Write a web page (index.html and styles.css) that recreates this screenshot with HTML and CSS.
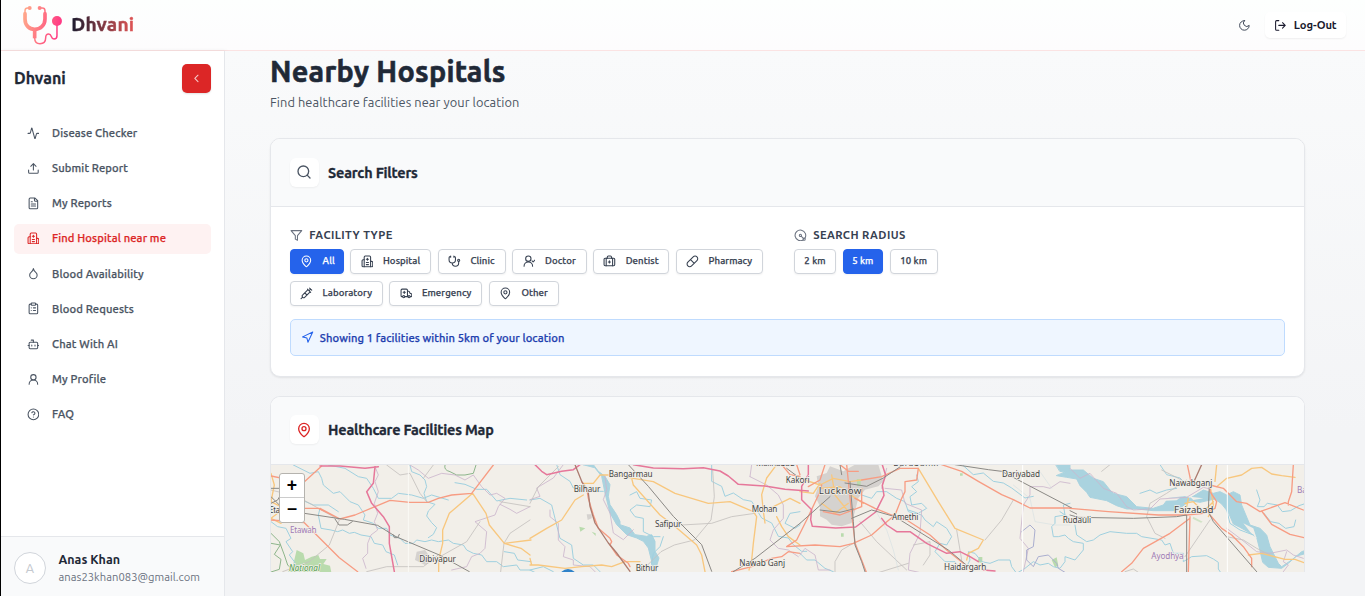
FILE: index.html
```html
<!DOCTYPE html>
<html lang="en">
<head>
<meta charset="utf-8">
<title>Dhvani - Nearby Hospitals</title>
<link rel="stylesheet" href="styles.css">
</head>
<body>
<svg class="defs" width="0" height="0">
  <symbol id="pin" viewBox="0 0 24 24"><path d="M20 10c0 4.993-5.539 10.193-7.399 11.799a1 1 0 0 1-1.202 0C9.539 20.193 4 14.993 4 10a8 8 0 0 1 16 0"/><circle cx="12" cy="10" r="3"/></symbol>
  <symbol id="hospital" viewBox="0 0 24 24"><path d="M12 6v4M14 14h-4M14 18h-4M14 8h-4"/><path d="M18 12h2a2 2 0 0 1 2 2v6a2 2 0 0 1-2 2H4a2 2 0 0 1-2-2v-9a2 2 0 0 1 2-2h2"/><path d="M18 22V4a2 2 0 0 0-2-2H8a2 2 0 0 0-2 2v18"/></symbol>
</svg>
<div class="app">
  <header class="topbar">
    <div class="brand">
      <svg class="brand-logo" viewBox="66 14 124 120" fill="none">
        <defs><linearGradient id="lg" gradientUnits="userSpaceOnUse" x1="68" y1="40" x2="188" y2="70"><stop offset="0" stop-color="#ffab8c"/><stop offset=".5" stop-color="#ff7583"/><stop offset="1" stop-color="#ff3385"/></linearGradient></defs>
        <g stroke="url(#lg)">
          <path stroke-width="11" stroke-linecap="round" d="M75 40V56C75 76 88 87 104 87S135 76 135 56V40"/>
          <path stroke-width="4.5" d="M75 40V31Q75 23 83 23H88M135 40V31Q135 23 127 23H120"/>
          <path stroke-width="11" d="M104 88V114"/>
          <path stroke-width="4.5" d="M104 112C104 124 110 130 120 130C133 130 137 123 137 113C137 105 140 101 146 101C157 101 151 116 162 116Q171 116 171 106V74"/>
        </g>
        <g fill="url(#lg)"><circle cx="89" cy="23" r="6"/><circle cx="119" cy="23" r="6"/><circle cx="171" cy="62" r="15"/></g>
      </svg>
      <span class="brand-name">Dhvani</span>
    </div>
    <div class="top-actions">
      <svg class="icon" viewBox="0 0 24 24"><path d="M12 3a6 6 0 0 0 9 9 9 9 0 1 1-9-9Z"/></svg>
      <button class="logout"><svg class="icon" viewBox="0 0 24 24"><path d="M9 21H5a2 2 0 0 1-2-2V5a2 2 0 0 1 2-2h4M16 17l5-5-5-5M21 12H9"/></svg><span>Log-Out</span></button>
    </div>
  </header>
  <div class="body">
    <aside class="sidebar">
      <div class="side-head"><span class="side-title">Dhvani</span><button class="collapse"><svg class="icon" viewBox="0 0 24 24"><path d="m15 18-6-6 6-6"/></svg></button></div>
      <nav class="nav">
        <a class="nav-item"><svg class="icon" viewBox="0 0 24 24"><path d="M22 12h-2.5a2 2 0 0 0-1.9 1.5l-2.4 8.3a.25.25 0 0 1-.5 0L9.200 2.200a.25.25 0 0 0-.5 0l-2.300 8.300A2 2 0 0 1 4.500 12H2"/></svg><span>Disease Checker</span></a>
        <a class="nav-item"><svg class="icon" viewBox="0 0 24 24"><path d="M21 15v4a2 2 0 0 1-2 2H5a2 2 0 0 1-2-2v-4M17 8l-5-5-5 5M12 3v12"/></svg><span>Submit Report</span></a>
        <a class="nav-item"><svg class="icon" viewBox="0 0 24 24"><path d="M15 2H6a2 2 0 0 0-2 2v16a2 2 0 0 0 2 2h12a2 2 0 0 0 2-2V7ZM14 2v4a2 2 0 0 0 2 2h4M10 9H8M16 13H8M16 17H8"/></svg><span>My Reports</span></a>
        <a class="nav-item nav-item--active"><svg class="icon"><use href="#hospital"/></svg><span>Find Hospital near me</span></a>
        <a class="nav-item"><svg class="icon" viewBox="0 0 24 24"><path d="M12 22a7 7 0 0 0 7-7c0-2-1-3.900-3-5.500s-3.500-4-4-6.500c-.5 2.500-2 4.900-4 6.500C6 11.100 5 13 5 15a7 7 0 0 0 7 7z"/></svg><span>Blood Availability</span></a>
        <a class="nav-item"><svg class="icon" viewBox="0 0 24 24"><rect x="8" y="2" width="8" height="4" rx="1"/><path d="M16 4h2a2 2 0 0 1 2 2v14a2 2 0 0 1-2 2H6a2 2 0 0 1-2-2V6a2 2 0 0 1 2-2h2M12 11h4M12 16h4M8 11h.01M8 16h.01"/></svg><span>Blood Requests</span></a>
        <a class="nav-item"><svg class="icon" viewBox="0 0 24 24"><path d="M12 8V4H8M2 14h2M20 14h2M15 13v2M9 13v2"/><rect x="4" y="8" width="16" height="12" rx="2"/></svg><span>Chat With AI</span></a>
        <a class="nav-item"><svg class="icon" viewBox="0 0 24 24"><circle cx="12" cy="8" r="5"/><path d="M20 21a8 8 0 0 0-16 0"/></svg><span>My Profile</span></a>
        <a class="nav-item"><svg class="icon" viewBox="0 0 24 24"><circle cx="12" cy="12" r="10"/><path d="M9.090 9a3 3 0 0 1 5.830 1c0 2-3 3-3 3M12 17h.01"/></svg><span>FAQ</span></a>
      </nav>
      <div class="account">
        <span class="avatar">A</span>
        <div class="account-text"><strong>Anas Khan</strong><span>anas23khan083@gmail.com</span></div>
      </div>
    </aside>
    <main class="main">
      <h1>Nearby Hospitals</h1>
      <p class="lead">Find healthcare facilities near your location</p>
      <section class="card card--filters">
        <div class="card-head"><span class="tile"><svg class="icon" viewBox="0 0 24 24"><circle cx="11" cy="11" r="8"/><path d="m21 21-4.300-4.300"/></svg></span><h2>Search Filters</h2></div>
        <div class="card-body">
          <div class="groups">
            <div>
              <h3><svg class="icon" viewBox="0 0 24 24"><path d="M22 3H2l8 9.460V19l4 2v-8.540L22 3z"/></svg><span>FACILITY TYPE</span></h3>
              <div class="chips">
                <button class="chip chip--on w-all"><svg class="icon"><use href="#pin"/></svg><span>All</span></button>
                <button class="chip w-hospital"><svg class="icon"><use href="#hospital"/></svg><span>Hospital</span></button>
                <button class="chip w-clinic"><svg class="icon" viewBox="0 0 24 24"><path d="M11 2v2M5 2v2M5 3H4a2 2 0 0 0-2 2v4a6 6 0 0 0 12 0V5a2 2 0 0 0-2-2h-1M8 15a6 6 0 0 0 12 0v-3"/><circle cx="20" cy="10" r="2"/></svg><span>Clinic</span></button>
                <button class="chip w-doctor"><svg class="icon" viewBox="0 0 24 24"><circle cx="10" cy="7" r="5"/><path d="M2 21a8 8 0 0 1 16 0M17 11l2 2 4-4"/></svg><span>Doctor</span></button>
                <button class="chip w-dentist"><svg class="icon" viewBox="0 0 24 24"><path d="M12 11v4M14 13h-4M16 6V4a2 2 0 0 0-2-2h-4a2 2 0 0 0-2 2v2M18 6v14M6 6v14"/><rect x="2" y="6" width="20" height="14" rx="2"/></svg><span>Dentist</span></button>
                <button class="chip w-pharmacy"><svg class="icon" viewBox="0 0 24 24"><path d="m10.500 20.500 10-10a4.950 4.950 0 1 0-7-7l-10 10a4.950 4.950 0 1 0 7 7ZM8.500 8.500l7 7"/></svg><span>Pharmacy</span></button>
                <button class="chip w-lab"><svg class="icon" viewBox="0 0 24 24"><path d="m18 2 4 4M17 7l3-3M19 9 8.700 19.300c-1 1-2.500 1-3.400 0l-.6-.6c-1-1-1-2.500 0-3.400L15 5M9 11l4 4M5 19l-3 3M14 4l6 6"/></svg><span>Laboratory</span></button>
                <button class="chip w-emergency"><svg class="icon" viewBox="0 0 24 24"><path d="M10 10H6M8 8v4M14 18V6a2 2 0 0 0-2-2H4a2 2 0 0 0-2 2v11a1 1 0 0 0 1 1h2M9 18h6M19 18h2a1 1 0 0 0 1-1v-3.280a1 1 0 0 0-.684-.948l-1.923-.641a1 1 0 0 1-.578-.502l-1.539-3.076A1 1 0 0 0 16.382 8H14"/><circle cx="17" cy="18" r="2"/><circle cx="7" cy="18" r="2"/></svg><span>Emergency</span></button>
                <button class="chip w-other"><svg class="icon"><use href="#pin"/></svg><span>Other</span></button>
              </div>
            </div>
            <div>
              <h3><svg class="icon" viewBox="0 0 24 24"><path d="M20.340 17.520a10 10 0 1 0-2.820 2.820M13.410 13.410l4.180 4.180"/><circle cx="19" cy="19" r="2"/><circle cx="12" cy="12" r="2"/></svg><span>SEARCH RADIUS</span></h3>
              <div class="chips">
                <button class="chip chip--plain w-2">2 km</button>
                <button class="chip chip--plain chip--on w-5">5 km</button>
                <button class="chip chip--plain w-10">10 km</button>
              </div>
            </div>
          </div>
          <div class="notice"><svg class="icon" viewBox="0 0 24 24"><path d="M3 11 22 2l-9 19-2-8z"/></svg><span>Showing 1 facilities within 5km of your location</span></div>
        </div>
      </section>
      <section class="card card--map">
        <div class="card-head"><span class="tile tile--red"><svg class="icon"><use href="#pin"/></svg></span><h2>Healthcare Facilities Map</h2></div>
        <div class="map">
          <svg class="map-canvas" viewBox="271 465 1033 107">
            <rect x="271" y="465" width="1033" height="107" fill="#f2efe9"/>
            <!-- west: Etawah, Dibiyapur -->
            <g class="sector" transform="translate(260 370) scale(.33333)">
              <path class="park" d="M110 540l20 10 5 20 20-10 20-5 5 12 20 0-10 15 20 5 5 25H80l20-30z"/>
              <path class="town" d="M470 545l25-5 15 20 15 10-30 15-30-15z"/>
              <path class="park-line" d="M555 285q-5 15 15 20l20 10 25 0 25-5 8-25M33 490l25 25 15 40 10 30 20 20M33 520l28 5-18 28 20 15-5 30-25 8"/>
              <path class="water" d="M33 455l20 15 25 5 15 30-15 10 20 30-10 10 15 20 10 30M100 285l50 25 25-5 10 20 5 20 30 25 20-5 30 30 25 10 20 30-5 15 30 10 15 15 25 0 10 20 30 10 15 15 25 0 10-10 25 5 20-5 20 5 30-5 15 10 30 5 10 15 20 10 25 5 15 20 30 0 20 15 40-5 10 15 30 0 20 10M450 285l5 20 25 10 15 15 5 20-8 20 8 25 25 8-20 20-5 15 15 20 15 15-10 20-15 10M180 415l-5 20 8 40 30 5 20 5 15-5 20 10 15-3 20 8 30 5 10 20 25 5 10 20 25 10 10 30M125 390l35 15 45 0 30 20M205 285l50 10 40 25 25 5 20 30 15 30 40 0 20-15 40 5 35 10 25-10 50 15M585 338l30 5 35 15 30 0 30 35 40-8 50 5M733 545l30 5 10 20 40 5"/>
              <path class="border" d="M345 290l10 25-10 20 10 30-12 35 10 30-10 25 10 25-20 15-10 25 0 30-15 15 10 30M450 285l25 15 30 25 40-15 40 5 30 15 25-15 25 35 25 25 20-5 25 15-20 25-10 25-60 20 35 30-5 50-15 15-25 10-15 30-45 10M720 403l30 15 20 12 40-20"/>
              <path class="minor" d="M33 360l80 20 125 70-30 75-60 50-80 30M380 285l40 30 30-5 30 60 20 25M520 285l-30 40M660 455l-40 60-80 45M810 450l-60 40-18 30-10 85M810 410l-90-15M320 605l60-15 110 0 45-35"/>
              <path class="secondary" d="M33 310l10 35-10 50 40 20-40 30 30 15M638 370l-70 60-20 50 0 40-12 50 0 35M638 370l40 60 10 35 45 55 80-10M733 520l50 15 27 20"/>
              <path class="primary" d="M185 288l-55 50-97-20M110 415l65 0 65 32 45-12 105-44 60 6 55 0 30-12 40-10 60-5 65-85M33 450l100 8 60 60 45 45 55 42M240 447l-60-32"/>
              <path class="trunk" d="M180 288l60 0 75 7 40-5M345 290l-5 50-20 25 15 35 35 40 18 30 0 50 15 85"/>
              <path class="rail" d="M33 380l40 40 60 10 120 18 100 18 55 34 130 55 90 50M225 447l12 18 25 0 15-10M33 355l40 0-20 35-20 10M400 495l3 8 10 0 5-10"/>
              <path class="seam" d="M445 285v320"/>
              <text class="place" x="28" y="429" textLength="50">Etaw</text>
              <text class="district" x="90" y="490" textLength="80">Etawah</text>
              <text class="reserve" x="87" y="602" textLength="93">National</text>
              <text class="place" x="478" y="575" textLength="110">Dibiyapur</text>
            </g>
            <!-- centre-west: Ganges, Bilhaur, Safipur -->
            <g class="sector" transform="translate(530 455) scale(.33333)">
              <path class="lake" d="M160 29h30l15 20 20 15 15 25-5 35 5 25 20 30 10 20 0 10 30 10 15 20 35 5 15-5 10 20 0 30 12 20-12 40h-10l0-30-10-40-15-20-20-10-30-10-30-30-20-35-15-60-10-50-20-25z"/>
              <path class="park" d="M148 215l18 5-15 10zM185 230l12 5 0 8z"/>
              <path class="town" d="M170 178h15v12l-12 5z"/>
              <path class="water" d="M0 135l30-5 35 20 10 40 15 60 35 20 5 40 30 20 30 0 20 20M400 245l-10 30-20 20-5 30M300 120l20-10 10 20 35 5-5 20-40-5-20 15 15 20 25 5 0 40 30 15 20 0M545 29l0 50 30 15 10 30 25-10 30 20 25 5 30 50 30 15 20 40 30 5 15 20 25 20 15 0M810 170l-30 5-15 30 30 15 15-10M80 29l10 30 30 20 10 20 30-5 40 15 20 0M0 345l40-10 30 15"/>
              <path class="border" d="M225 64l5 40-10 30 20 40 10 60 30 20 30-30M100 29l-30 40-50 30 10 25-30 10M60 165l0 20 25 20 0 50 20 20-5 30 30 10 0 15 50 5 30 30M660 65l5-36M660 65l50 25 35 30 15 30 0 40-30 35-10 30 25 25 30 5 30 20"/>
              <path class="minor" d="M85 35l-60 60-25 50M548 45l5 80-10 70-50 60-60 15-40 20-40 40M455 210l90-5 60-20 70-10"/>
              <path class="secondary" d="M160 85l30 0 20-25 50 0 50 10 60 10 65 35 50 15 50 15 65-5 70 30 10 15-10 80-5 50-8 30M740 29l-30 40-15 50 5 50 5 35M740 185l15 30 20 30 35 25M710 165l40-20 30-15 30 15M0 250l50-30 45-25 40-60 25-15M0 330l25 0 80 10 50-5 60-5 30 5 40-15 45 0M300 50l10 40 80 90 40 30 70 60 15 30 10 50M0 310l5 20"/>
              <path class="primary" d="M155 80l15 20 5 30 15 50 15 40 35 30 5 10-5 10 20 30 35 25 5 10M605 350l60-15 60-25 30-5 20-15 35 5M800 29l10 30M755 29l25 30 30 5"/>
              <path class="trunk" d="M15 29l20 20 15 10 45-10 35-5 20-15M310 29l60 10 90 2 60-3 50 10 25 15 30 25 80 5 60 10 70 5"/>
              <path class="rail" d="M295 29l60 65 75 90 85 85 30 80M610 350l65-40 135-105M770 40l40 30"/>
              <path class="railred" d="M135 29l20 50 20 35 5 40 15 50 40 60 25 30 40 55"/>
              <circle cx="114" cy="368" r="26" fill="#2f82c9"/>
              <text class="place" x="236" y="65" textLength="132">Bangarmau</text>
              <text class="place" x="131" y="111" textLength="80">Bilhaur</text>
              <text class="place" x="375" y="215" textLength="79">Safipur</text>
              <text class="place" x="317" y="348" textLength="68">Bithur</text>
              <text class="place" x="665" y="172" textLength="77">Mohan</text>
              <text class="place" x="628" y="332" textLength="137">Nawab Ganj</text>
              <text class="place" x="678" y="32" textLength="116">Malihabad</text>
            </g>
            <!-- centre-east: Lucknow, Haidargarh -->
            <g class="sector" transform="translate(800 455) scale(.33333)">
              <path class="town" d="M165 29h70l15 50-15 15-40 10-20 25-10 40-10 35-30 10-30-5-15-15-20-10 0-30-15-30 10-30-5-30 30-10 10-20 40 15z"/>
              <path class="park" d="M170 72h12v20l-10 2zM537 306h10v18l-15-3zM480 55h8v7h-8zM755 315l15-8 5 25-10 5zM123 235h8v10h-8z"/>
              <path class="water" d="M350 60l5 20-20 15 15 15-20 15 5 25 30-5 15 15-25 15-30-10M185 120l30 10 15-20 30 0 30 20 25 10 10 30 40 10 10 15 25 20 10-15 30 20 15 25-15 25-20-5-15 25 20 20 10 10 30 0 10 15 25 0 10-20-5-25 20 5 20 25 25 5 25-10 35 0 5 20 15 20 25-15 25-20 20 10 25-5 15 10 20 5 15-20 0-15 30 10 25-30 0-20-30-5-15-10-10-10-20 5-15 0-5-30 10-10 0-20 30-5-5-30 20-5M490 32l30 27 30-5 30 25 30 5 25 15 40 30 25-5M0 295l20 20 25 0 30 25 25 10M780 170l30 20"/>
              <path class="lake" d="M768 29h42v25l-30-5z"/>
              <path class="border" d="M245 100l15-60M255 100l50 5 10 40 50 20-5 70-30 60-5 50 45 10 20 15 25 0M0 300l15-20 30 20 10 45 35 0M670 350l15-70-25-30 10-100 20-30 0-25 40 0 20 5 30-20 30 5"/>
              <path class="border2" d="M665 230l25-20 15 15-5 50-20 10 0 30 20 20 15-30 30-5 25 25 5 15 25 15"/>
              <path class="minor" d="M180 200l50 60 90 85M325 325l-90 28M160 265l-35 20-20 35 0 30M640 135l-35 60-50 60M470 225l15 90M340 270l50-10 0 40-20 30"/>
              <path class="thin" d="M220 155l40 70 20 60 15 60M640 90l50 40 15 70 60 10 45 0M690 50l30 0 35 50"/>
              <path class="secondary" d="M355 40l60 100 50 80 85 35-15 25-30 15-5 20M0 70l60 20 40-20 50 10 35-5M60 100l60-5 40 30 30 20M95 60l10 60 40 50M0 110l40 5 20-30M65 145l40 30 40-30"/>
              <path class="primary" d="M25 95l35-20 15-46M120 29l25 20 30 0M185 75l60-10 55-25 55 0-5 35-35 5 0 30-10 20-20 50-30 25-40 35-55 25-40 10-75-5-85 5 30-20 30-60 40-85 5-20M165 130l60 30 50 20 45 15 70 45 50 45 50 40M140 29l10 100 15 135 35 90M70 170l50 10 65-25 0-55M425 29l60 20 50 30 70 40 35 15 30 15 20 10 120 0"/>
              <path class="trunk" d="M25 29l0 30-20 35 0 40 30 30-3 30 5 20 70 5 60-3 60-45 25-50-5-30 10-30-15-47M245 190l15 20 30 20 40 0 50 35 60 30 40-5 30 15 25 15M550 345l35 3"/>
              <path class="rail" d="M0 205l90-80M120 29l5 30M310 29l-60 40-50 25-65-10M150 80l10 120 5 70 20 50 10 30M60 165l60 7 40-10M155 190l60-25 70 20 160 100 60 50M465 29l100 15 40 5 210 110"/>
              <path class="seam wide" d="M668 29v322"/>
              <text class="place" x="-43" y="85" textLength="72">Kakori</text>
              <text class="city" x="56" y="117" textLength="128">Lucknow</text>
              <text class="place" x="276" y="196" textLength="79">Amethi</text>
              <text class="place" x="432" y="346" textLength="127">Haidargarh</text>
              <text class="place" x="606" y="67" textLength="114">Dariyabad</text>
              <text class="place" x="280" y="32" textLength="135">Barabanki</text>
            </g>
            <!-- east: Ghaghara, Faizabad -->
            <g class="sector" transform="translate(1070 455) scale(.33333)">
              <path class="lake" d="M0 45h40l30 25 30 10 20 25 10 10 40 10 30 30 50 5 30-10 15-20 50-5 15 5 40-25 30 10 20-5 20 10 20-10 20 10 5 30 25 60 30 10 20 20 10 35 25 50 10 10 30-20 30-25 15-5v10l-30 8-25 22-20 15-40-3-17-15-8-35-10-40-15-10-35-20-20-10-15-35-20-25-20-15-45 10-30-5-40 30-70 0-50-5-30 0-30-10-30-15-50-10-10-15-20-20-10-20-30-5-30-5z"/>
              <path class="park-fill" d="M180 100l30 10 10 10-25-4zM270 128h60l-10 8-50 2zM360 125l40 5-30 5zM520 205l30 15 10 30-20-20z"/>
              <path class="park" d="M370 185l28 15-5 3-25-12z" opacity=".6"/>
              <path class="water" d="M270 29l20 30 40 10 20 20M210 115l30-10 20 10 30-10 30-5M15 210l5 30 30 20 20-5 20-15 30-10 50 5 30 0 15 10 60 10 10 15 15-5 10 30 30 0 0 25 25-15 45-3 20 10 15 10 0 20 10 15 15 5 20-3 20 10 30-5M560 105l10 30-8 20 20 0 10-10 30 5 15 20 25-3 25-15 15-5M582 175l20 25 25 5 20 15 25-5 5-20M470 165l10 40 30 20 40 15"/>
              <path class="border" d="M0 40l30 30 30-15 40 45 40 15 30 40 20 10 50-3 30-30 80-5 50-30 20 5M470 220l40 30 50 40 40 5 50-10 20 15 30 10M650 290l-10 30 15 10-15 20"/>
              <path class="minor" d="M95 49l25-20M275 45l60 30M350 75l-60 40-50 30-10 40 25 50 30 15M345 305l75-110M470 245l50 10 40 25 40 20M165 350l25-8 15 10"/>
              <path class="secondary" d="M440 29l-5 50M440 95l30-25 45-10 30-20 30-3 30 20 30 5 40 5M420 90l10 60-15 35M535 300l40-5 70 18 30 0 27 10M345 145l25-5 20 20M345 180l10-50M400 170l30-30"/>
              <path class="primary" d="M0 160l115 10 150 10 85 0 50-5 35-15 5-20-20-30 0-20 40 10 40 40 30 5 40 25 75-27 55 22M655 150l0-10 10-30 5-81M575 168l30 40 55 30 42 10M365 90l-13-61M420 180l35 40 30 20 35 35 25 35 0 25M360 185l-5 165M360 190l-60 45-80 45-35 45-30 25"/>
              <path class="rail" d="M0 180l25 7 165 3 130-5 30-5 0 170M0 167l20 10M418 90l-3 80 15 30 130 150"/>
              <path class="railred" d="M395 29l-25 55"/>
              <path class="seam wide" d="M472 29v322"/>
              <text class="place" x="-22" y="204" textLength="85">Rudauli</text>
              <text class="place" x="298" y="93" textLength="129">Nawabganj</text>
              <text class="city" x="312" y="174" textLength="118">Faizabad</text>
              <text class="district" x="244" y="311" textLength="97">Ayodhya</text>
              <text class="district" x="681" y="113">Ba</text>
            </g>
          </svg>
          <div class="zoom"><button>+</button><button>−</button></div>
        </div>
      </section>
    </main>
  </div>
</div>
</body>
</html>
```
FILE: styles.css
```css
* { box-sizing: border-box; }
body { margin: 0; height: 596px; overflow: hidden; font-family: Ubuntu, "Noto Sans", sans-serif; color: #1f2937; }
button { font: inherit; color: inherit; border: 0; background: none; padding: 0; margin: 0; }
h1, h2, h3, p { margin: 0; }
.defs { position: absolute; }
.icon { width: 12.8px; height: 12.8px; flex: none; fill: none; stroke: currentColor; stroke-width: 2; stroke-linecap: round; stroke-linejoin: round; }
.app { height: 596px; display: flex; flex-direction: column; border-left: 1px solid #000; }

.topbar { height: 51px; flex: none; display: flex; justify-content: space-between; align-items: center; padding: 0 19px 0 21px; border-bottom: 1px solid #fbe3e3; background: linear-gradient(#fdfffe, #fdfcfd); }
.brand { display: flex; align-items: center; gap: 8px; }
.brand-logo { width: 41.3px; height: 40px; }
.brand-name { font-size: 19.200px; font-weight: 700; line-height: 28px; letter-spacing: .15px; margin-top: -2px; background: linear-gradient(90deg, #1a1a2e, #e15555); -webkit-background-clip: text; background-clip: text; color: transparent; -webkit-text-stroke: .4px transparent; }
.top-actions { display: flex; align-items: center; gap: 14px; color: #1a1a2e; }
.top-actions > .icon { color: #374151; stroke-width: 1.800; }
.logout { display: flex; align-items: center; gap: 7px; height: 26px; width: 81px; padding-left: 9px; border-radius: 5px; background: #fff; box-shadow: 0 1px 2px rgba(0,0,0,.06); font-size: 11.200px; font-weight: 600; letter-spacing: -.1px; }

.body { flex: 1; min-height: 0; display: flex; }
.sidebar { width: 224px; flex: none; display: flex; flex-direction: column; background: #fff; border-right: 1px solid #e5e7eb; box-shadow: 1px 0 4px rgba(0,0,0,.08); }
.side-head { display: flex; justify-content: space-between; align-items: center; padding: 13px 13px 0; height: 42px; }
.side-title { font-size: 16px; font-weight: 700; margin-top: -2px; -webkit-text-stroke: .3px; }
.collapse { width: 29px; height: 29px; border-radius: 5px; background: #dc2626; color: #fff; display: flex; align-items: center; justify-content: center; box-shadow: 0 1px 2px rgba(0,0,0,.12); }
.collapse .icon { opacity: .75; }
.nav { flex: 1; padding: 25.100px 13px 0; display: flex; flex-direction: column; gap: 5.15px; }
.nav-item { height: 30px; display: flex; align-items: center; gap: 12.8px; padding-left: 12.500px; border-radius: 5px; font-size: 11.200px; font-weight: 500; color: #4b5563; letter-spacing: .12px; }
.nav-item span, .chip, .notice span { -webkit-text-stroke: .25px; }
.nav-item--active { background: #fef2f2; color: #dc2626; padding-bottom: 1px; }
.account { height: 60px; flex: none; display: flex; align-items: center; gap: 12.500px; padding: 2px 13px 0; background: #f9fafb; border-top: 1px solid #e5e7eb; }
.avatar { width: 32px; height: 32px; border: 1px solid #d1d5db; border-radius: 50%; background: #fff; color: #c5c9cf; font-size: 12.800px; display: flex; align-items: center; justify-content: center; }
.account-text { display: flex; flex-direction: column; margin-top: 2px; font-size: 11.200px; line-height: 17.500px; color: #6b7280; letter-spacing: .04px; }
.account-text strong { font-size: 12.500px; font-weight: 600; color: #1f2937; letter-spacing: 0; }

.main { flex: 1; min-width: 0; overflow: hidden; padding: 0 60px 24px 45px; background: linear-gradient(#f9fafb, #f3f4f6 70%); display: flex; flex-direction: column; }
.main h1 { font-size: 28.800px; line-height: 32px; margin-top: 4px; font-weight: 700; letter-spacing: .25px; -webkit-text-stroke: .6px; }
.lead { font-size: 12.800px; line-height: 20px; margin-top: 5px; color: #4b5563; letter-spacing: .08px; }
.card { background: #fff; border: 1px solid #e5e7eb; border-radius: 10px; overflow: hidden; box-shadow: 0 1px 2px rgba(0,0,0,.08); }
.card--filters { margin-top: 26px; height: 239px; flex: none; }
.card--map { margin-top: 19px; flex: 1; min-height: 0; border-bottom: 0; border-bottom-left-radius: 0; border-bottom-right-radius: 0; box-shadow: none; display: flex; flex-direction: column; }
.card-head { height: 68px; flex: none; display: flex; align-items: center; gap: 9.500px; padding: 0 19px; background: #f9fafb; border-bottom: 1px solid #e5e7eb; }
.card--map .card-head { padding-bottom: 1.500px; }
.tile { width: 28.600px; height: 28.800px; border-radius: 6px; background: #fff; box-shadow: 0 1px 2px rgba(0,0,0,.05); display: flex; align-items: center; justify-content: center; color: #4b5563; }
.tile .icon { width: 16px; height: 16px; margin-right: 1px; }
.tile--red { color: #dc2626; }
.card-head h2 { font-size: 14.400px; font-weight: 600; letter-spacing: -.2px; -webkit-text-stroke: .3px; }
.card-body { padding: 19px; }
.groups { display: grid; grid-template-columns: 504px 1fr; align-items: start; }
h3 { display: flex; align-items: center; gap: 6.400px; height: 18px; font-size: 11.200px; font-weight: 600; color: #374151; letter-spacing: .4px; }
h3 .icon { color: #6b7280; }
.chips { display: flex; flex-wrap: wrap; gap: 7px 6.500px; margin-top: 5px; max-width: 480px; }
.chip { height: 25px; display: flex; align-items: center; gap: 9.500px; padding: 0 0 2px 9.300px; border: 1px solid #d1d5db; border-radius: 4px; background: #fff; font-size: 9.600px; font-weight: 500; color: #374151; letter-spacing: .08px; box-shadow: 0 1px 2px rgba(0,0,0,.05); white-space: nowrap; }
.chip .icon { position: relative; top: 1px; }
.chip--on { background: #2563eb; border-color: #2563eb; color: #fff; }
.chip--plain { padding: 0 0 2px; justify-content: center; }
.w-all { width: 53.900px; } .w-hospital { width: 81px; } .w-clinic { width: 68px; } .w-doctor { width: 74.200px; }
.w-dentist { width: 76.400px; } .w-pharmacy { width: 87px; } .w-lab { width: 92.800px; } .w-emergency { width: 93px; } .w-other { width: 70px; }
.w-2 { width: 42px; } .w-5 { width: 40.600px; } .w-10 { width: 48px; }
.notice { height: 37px; margin-top: 13px; display: flex; align-items: center; gap: 6px; padding-left: 10px; border: 1px solid #bfdbfe; border-radius: 5px; background: #eff6ff; color: #1e40af; font-size: 11.200px; font-weight: 500; letter-spacing: .08px; }
.notice .icon { color: #2563eb; }

.map { position: relative; flex: 1; min-height: 0; }
.map-canvas { display: block; width: 1033px; height: 107px; }
.zoom { position: absolute; left: 8px; top: 8px; width: 26px; height: 50px; border: 1px solid #b5b3ae; border-radius: 3px; background: #fff; display: flex; flex-direction: column; overflow: hidden; }
.zoom button { height: 23px; flex: none; font: bold 17.600px/23px "Liberation Sans", Arial, sans-serif; color: #000; }
.zoom button + button { height: 25px; border-top: 1px solid #ccc; padding-bottom: 1px; }
.sector path { fill: none; stroke-linejoin: round; stroke-linecap: round; }
.sector .water { stroke: #9fd0df; stroke-width: 3; }
.sector .lake { fill: #aad3df; stroke: #aad3df; stroke-width: 3; }
.sector .town { fill: #d5d2cf; }
.sector .park { fill: #b9dbad; }
.sector .park-fill { fill: #f2efe9; }
.sector .park-line { stroke: #8db58b; stroke-width: 3; }
.sector .border { stroke: #cbb6cc; stroke-width: 2.500; }
.sector .border2 { stroke: #aaaecf; stroke-width: 3; }
.sector .minor { stroke: #c4c1be; stroke-width: 2.500; }
.sector .thin { stroke: #cfdde0; stroke-width: 1.500; }
.sector .secondary { stroke: #f8c77e; stroke-width: 4; }
.sector .primary { stroke: #f79c83; stroke-width: 4; }
.sector .trunk { stroke: #e6779a; stroke-width: 4.500; }
.sector .rail { stroke: #8b8985; stroke-width: 3; }
.sector .railred { stroke: #ac7c70; stroke-width: 4; }
.sector .seam { stroke: #faf9f6; stroke-width: 3; }
.sector .wide { stroke: #fff; }
.sector text { font-family: "Noto Sans", sans-serif; font-size: 24.500px; fill: #444; stroke: #f2efe9; stroke-width: 4; paint-order: stroke; }
.sector .city { font-size: 29px; }
.sector .district { fill: #a07bb5; }
.sector .reserve { fill: #4b9b47; font-style: italic; }
```
